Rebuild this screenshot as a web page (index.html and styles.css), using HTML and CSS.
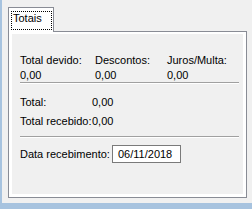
FILE: index.html
```html
<!DOCTYPE html>
<html>
<head>
<meta charset="utf-8">
<link rel="stylesheet" href="styles.css">
</head>
<body>
<div class="window">
  <div class="tab"><div class="focus">Totais</div></div>
  <div class="pane">
    <div class="page">
      <div class="grid3">
        <span>Total devido:</span><span>Descontos:</span><span>Juros/Multa:</span>
        <span>0,00</span><span>0,00</span><span>0,00</span>
      </div>
      <div class="sep sep1"></div>
      <div class="grid2 totals">
        <span>Total:</span><span>0,00</span>
      </div>
      <div class="grid2 received">
        <span>Total recebido:</span><span>0,00</span>
      </div>
      <div class="sep sep2"></div>
      <div class="daterow">
        <span class="datelabel">Data recebimento:</span>
        <div class="textbox">06/11/2018</div>
      </div>
    </div>
  </div>
</div>
</body>
</html>
```
FILE: styles.css
```css
html, body {
  margin: 0;
  padding: 0;
}
body {
  width: 252px;
  height: 209px;
  background: #a7c3df;
  font-family: "Liberation Sans", Arial, sans-serif;
  font-size: 11px;
  line-height: 13px;
  color: #000;
  overflow: hidden;
}
.window {
  margin-left: 2px;
  height: 203px;
  background: #f0f0f0;
  padding-top: 7px;
  box-sizing: border-box;
}
.tab {
  position: relative;
  z-index: 1;
  margin-left: 6px;
  width: 46px;
  height: 25px;
  box-sizing: border-box;
  border: 1px solid #898c95;
  border-bottom: none;
  background: #fff;
  padding: 3px 0 0 2px;
  margin-bottom: -1px;
}
.focus {
  width: 41px;
  height: 19px;
  box-sizing: border-box;
  border: 1px dotted #000;
  padding-left: 1px;
}
.pane {
  margin-left: 6px;
  width: 239px;
  height: 167px;
  box-sizing: border-box;
  border: 1px solid #898c95;
  background: #fff;
  padding: 2px 3px 3px 3px;
}
.page {
  height: 160px;
  background: #f0f0f0;
  padding: 20px 0 0 8px;
  box-sizing: border-box;
}
.grid3 {
  display: grid;
  grid-template-columns: 75px 72px 1fr;
  row-gap: 2px;
}
.sep {
  width: 219px;
  border-top: 1px solid #a0a0a0;
  border-bottom: 1px solid #fff;
}
.sep1 {
  margin-top: 0;
}
.grid2 {
  display: grid;
  grid-template-columns: 72px 1fr;
}
.totals {
  margin-top: 12px;
}
.received {
  margin-top: 6px;
}
.sep2 {
  margin-top: 8px;
}
.daterow {
  display: flex;
  align-items: center;
  margin-top: 7px;
}
.datelabel {
  width: 92px;
}
.textbox {
  width: 69px;
  height: 18px;
  box-sizing: border-box;
  border: 1px solid #7a7a7a;
  background: #fff;
  padding-left: 5px;
  line-height: 16px;
}
```
